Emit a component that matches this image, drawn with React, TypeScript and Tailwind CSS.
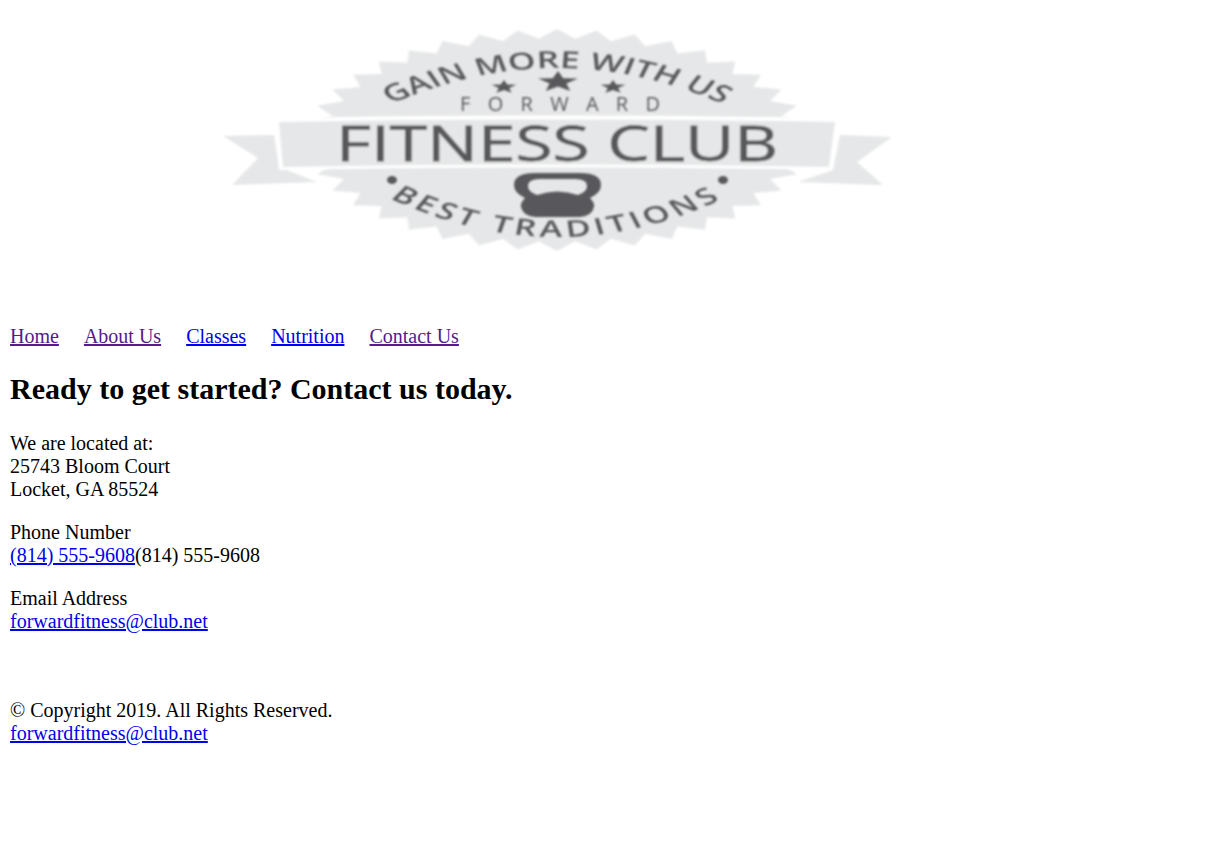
import React from 'react';

// badge outline: zigzag on a squashed circle
const badgePoints = () => {
  const teeth = 40;
  const pts: string[] = [];
  for (let i = 0; i < teeth * 2; i++) {
    const a = (i / (teeth * 2)) * Math.PI * 2;
    const r = i % 2 === 0 ? 1 : 0.915;
    pts.push(`${(557 + Math.cos(a) * 252 * r).toFixed(1)},${(140 + Math.sin(a) * 111 * r).toFixed(1)}`);
  }
  return pts.join(' ');
};

const starPoints = (cx: number, cy: number, rx: number, ry: number) => {
  const pts: string[] = [];
  for (let i = 0; i < 10; i++) {
    const a = -Math.PI / 2 + (i * Math.PI) / 5;
    const k = i % 2 === 0 ? 1 : 0.42;
    pts.push(`${(cx + Math.cos(a) * rx * k).toFixed(1)},${(cy + Math.sin(a) * ry * k).toFixed(1)}`);
  }
  return pts.join(' ');
};

const Logo = () => (
  <svg viewBox="0 0 1205 300" className="block w-[1205px] h-[300px]">
    <defs>
      <filter id="soft" x="-5%" y="-5%" width="110%" height="110%">
        <feGaussianBlur stdDeviation="0.8" />
      </filter>
      <filter id="softer" x="-5%" y="-5%" width="110%" height="110%">
        <feGaussianBlur stdDeviation="1.3" />
      </filter>
      {/* arcs live in the stretched group below, so x is squeezed by 1.5 */}
      <path id="arcTop" d="M427 118 Q557 18 687 118" />
      <path id="arcBottom" d="M437 192 Q557 282 677 192" />
    </defs>
    <polygon points={badgePoints()} fill="#e6e7e8" filter="url(#softer)" />
    <g filter="url(#soft)">
      <polygon points="223,136 274,135 279,167 317,182 232,185 258,158" fill="#e6e7e8" />
      <polygon points="840,135 892,137 857,162 883,185 798,182 833,170" fill="#e6e7e8" />
      <path d="M275 118 Q557 113 839 118 L833 170 Q557 165 279 170 Z" fill="#fff" />
      <path d="M279 122 Q557 117 835 122 L829 167 Q557 162 283 167 Z" fill="#e6e7e8" />

      <g fill="#58595b" fontFamily="'Open Sans', sans-serif">
        <g transform="translate(557 0) scale(1.5 1) translate(-557 0)">
          <text fontSize="23.5" fontWeight="600" textAnchor="middle">
            <textPath href="#arcTop" startOffset="50%">
              GAIN MORE WITH US
            </textPath>
          </text>
          <text fontSize="23" fontWeight="600" letterSpacing="3" textAnchor="middle">
            <textPath href="#arcBottom" startOffset="50%">
              BEST TRADITIONS
            </textPath>
          </text>
        </g>
        <polygon points={starPoints(558, 82, 21, 11)} />
        <polygon points={starPoints(504, 87, 13, 7)} />
        <polygon points={starPoints(613, 87, 13, 7)} />
        <text x="460" y="111" fontSize="20" textLength="200" lengthAdjust="spacing">
          FORWARD
        </text>
        <text x="336" y="161" fontSize="49" textLength="442" lengthAdjust="spacingAndGlyphs" stroke="#58595b" strokeWidth="0.8">
          FITNESS CLUB
        </text>
        <ellipse cx="392" cy="180" rx="5" ry="4" />
        <ellipse cx="723" cy="180" rx="5" ry="4" />
        {/* kettlebell */}
        <path
          fillRule="evenodd"
          d="M535 173 H580 Q601 173 601 185 Q601 193 590 198 Q595 203 594 207 Q592 216 580 217 H535 Q523 216 521 207 Q520 203 525 198 Q514 193 514 185 Q514 173 535 173 Z M540 179 Q528 179 528 186 Q528 192 537 195 Q557 188 578 195 Q587 192 587 186 Q587 179 575 179 Z"
        />
      </g>
    </g>
  </svg>
);

const visited = 'text-[#551a8b] underline';
const unvisited = 'text-[#0000ee] underline';

export default function App() {
  return (
    <div className="min-h-[841px] bg-white text-black text-[20px] leading-[23px] font-['Liberation_Serif',serif]">
      <Logo />
      <main className="px-[10px] pt-[25px]">
        <nav className="flex gap-[25px]">
          <a href="#home" className={visited}>Home</a>
          <a href="#about" className={visited}>About Us</a>
          <a href="#classes" className={unvisited}>Classes</a>
          <a href="#nutrition" className={unvisited}>Nutrition</a>
          <a href="#contact" className={visited}>Contact Us</a>
        </nav>
        <h2 className="mt-[24px] mb-[26px] text-[30px] leading-[34px] font-bold">Ready to get started? Contact us today.</h2>
        <p>
          We are located at:
          <br />
          25743 Bloom Court
          <br />
          Locket, GA 85524
        </p>
        <p className="mt-[20px]">
          Phone Number
          <br />
          <a href="#phone" className={unvisited}>(814) 555-9608</a>(814) 555-9608
        </p>
        <p className="mt-[20px]">
          Email Address
          <br />
          <a href="#email" className={unvisited}>forwardfitness@club.net</a>
        </p>
        <footer className="mt-[66px]">
          © Copyright 2019. All Rights Reserved.
          <br />
          <a href="#email" className={unvisited}>forwardfitness@club.net</a>
        </footer>
      </main>
    </div>
  );
}
